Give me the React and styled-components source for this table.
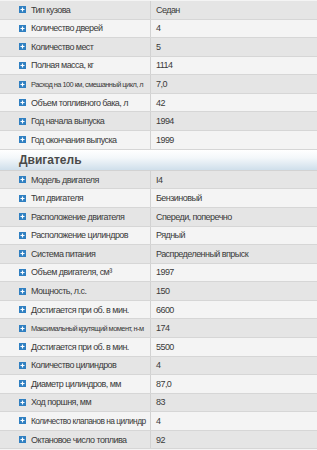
import React, { useLayoutEffect, useRef, useState } from "react";
import styled, { createGlobalStyle } from "styled-components";

const GlobalStyle = createGlobalStyle`
  html, body {
    margin: 0;
    padding: 0;
    background: #f4f4f4;
  }
  body {
    font-family: "Liberation Sans", Arial, sans-serif;
  }
`;

const BASE = 9;

const Table = styled.div`
  width: 317px;
  overflow: hidden;
  padding-top: 1px;
`;

const Row = styled.div`
  display: grid;
  grid-template-columns: 150px 1fr;
  height: 18.57px;
  box-sizing: border-box;
  border-bottom: 1px solid #d6d6d6;
  background: ${(p) => (p.$odd ? "#e5e5e5" : "#f4f4f4")};
  font-size: ${BASE}px;
  letter-spacing: -0.55px;
  color: #3a3a3a;
`;

const Label = styled.div`
  display: flex;
  align-items: center;
  gap: 5px;
  padding: 0 3px 0 19px;
  white-space: nowrap;
  min-width: 0;
  overflow: hidden;

  svg {
    flex-shrink: 0;
  }
`;

const LabelText = styled.span`
  display: block;
  flex: 1;
  min-width: 0;
  white-space: nowrap;
`;

const Value = styled.div`
  display: flex;
  align-items: center;
  padding-left: 5px;
  border-left: 1px solid #d2d2d2;
  white-space: nowrap;
`;

const Section = styled.div`
  height: 21.4px;
  box-sizing: border-box;
  display: flex;
  align-items: center;
  padding-left: 19px;
  font-size: 12px;
  font-weight: bold;
  color: #4a4a4a;
  background: linear-gradient(to bottom, #ffffff 0%, #f3f7fa 40%, #cfdfeb 100%);
  border-bottom: 1px solid #d2d2d2;
`;

const Icon = () => (
  <svg width="7" height="7" viewBox="0 0 7 7">
    <rect width="7" height="7" fill="#2f7fc1" />
    <path d="M1.5 3.5h4M3.5 1.5v4" stroke="#fff" strokeWidth="1.2" />
  </svg>
);

// long labels get a smaller size so they stay in the first column
function FitText({ children }) {
  const ref = useRef(null);
  const [size, setSize] = useState(null);

  useLayoutEffect(() => {
    const el = ref.current;
    if (!el) return;
    const free = el.clientWidth;
    const need = el.scrollWidth;
    if (need > free) setSize((BASE * free) / need);
  }, []);

  return (
    <LabelText ref={ref} style={size ? { fontSize: size + "px" } : undefined}>
      {children}
    </LabelText>
  );
}

const body = [
  ["Тип кузова", "Седан"],
  ["Количество дверей", "4"],
  ["Количество мест", "5"],
  ["Полная масса, кг", "1114"],
  ["Расход на 100 км, смешанный цикл, л", "7,0"],
  ["Объем топливного бака, л", "42"],
  ["Год начала выпуска", "1994"],
  ["Год окончания выпуска", "1999"],
];

const engine = [
  ["Модель двигателя", "I4"],
  ["Тип двигателя", "Бензиновый"],
  ["Расположение двигателя", "Спереди, поперечно"],
  ["Расположение цилиндров", "Рядный"],
  ["Система питания", "Распределенный впрыск"],
  ["Объем двигателя, см³", "1997"],
  ["Мощность, л.с.", "150"],
  ["Достигается при об. в мин.", "6600"],
  ["Максимальный крутящий момент, н-м", "174"],
  ["Достигается при об. в мин.", "5500"],
  ["Количество цилиндров", "4"],
  ["Диаметр цилиндров, мм", "87,0"],
  ["Ход поршня, мм", "83"],
  ["Количество клапанов на цилиндр", "4"],
  ["Октановое число топлива", "92"],
];

const Rows = ({ items }) =>
  items.map(([label, value], i) => (
    <Row key={label + i} $odd={i % 2 === 0}>
      <Label>
        <Icon />
        <FitText>{label}</FitText>
      </Label>
      <Value>{value}</Value>
    </Row>
  ));

export default function App() {
  return (
    <>
      <GlobalStyle />
      <Table>
        <Rows items={body} />
        <Section>Двигатель</Section>
        <Rows items={engine} />
      </Table>
    </>
  );
}
